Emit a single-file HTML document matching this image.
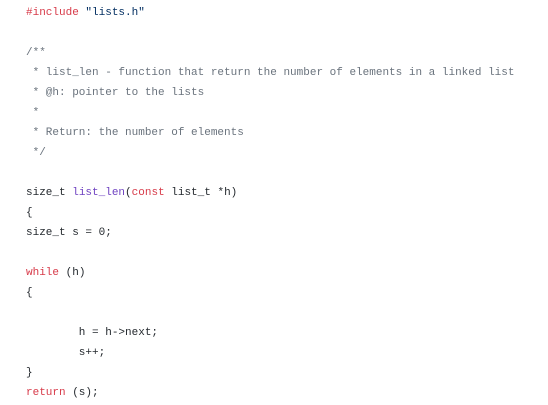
<!DOCTYPE html>
<html><head><style>
html,body{margin:0;padding:0;background:#fff;width:548px;height:405px;overflow:hidden}
pre{margin:0;position:absolute;left:26px;top:3px;font-family:"Liberation Mono",monospace;font-size:11px;line-height:20px;color:#24292e}
.k{color:#d73a49}.f{color:#6f42c1}.c{color:#6a737d}.s{color:#032f62}.n{color:#24292e}
</style></head><body>
<pre><span class="k">#include</span> <span class="s">"lists.h"</span>

<span class="c">/**
 * list_len - function that return the number of elements in a linked list
 * @h: pointer to the lists
 *
 * Return: the number of elements
 */</span>

size_t <span class="f">list_len</span>(<span class="k">const</span> list_t *h)
{
size_t s = <span class="n">0</span>;

<span class="k">while</span> (h)
{

        h = h-&gt;next;
        s++;
}
<span class="k">return</span> (s);
</pre>
</body></html>
